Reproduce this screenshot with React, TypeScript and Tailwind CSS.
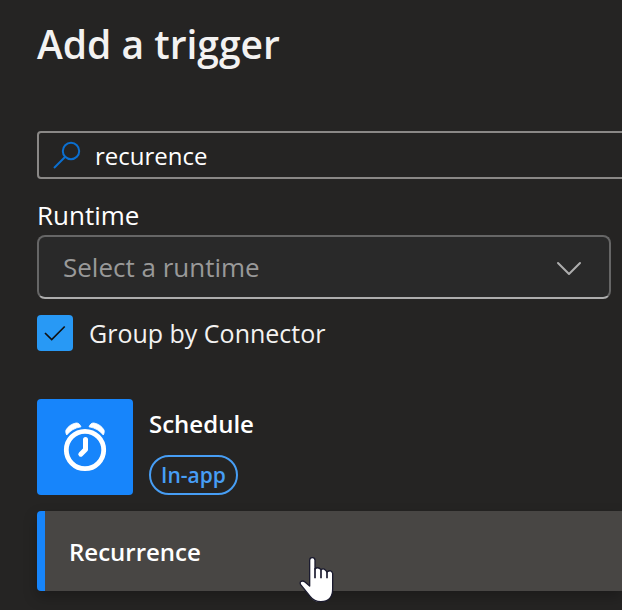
export default function App() {
  return (
    <main className="relative min-h-screen overflow-hidden bg-[#252423] pt-[18px] pl-[37px] font-['Open_Sans','Noto_Sans',sans-serif] text-white">
      <h1 className="text-[39px] leading-[52px] font-semibold text-[#f3f2f1]">Add a trigger</h1>

      <div className="mt-[61px] -mr-1 flex h-12 items-center rounded-[4px] border-2 border-[#8a8886] pl-3">
        <svg className="h-8 w-8 shrink-0" viewBox="0 0 32 32" fill="none" stroke="#0b6fd0" strokeWidth="2" aria-hidden="true">
          <circle cx="20" cy="12" r="8.2" />
          <path d="M14 18 3 29" />
        </svg>
        <input
          aria-label="Search"
          defaultValue="recurence"
          className="ml-3 h-full min-w-0 flex-1 bg-transparent text-[24px] leading-8 text-white outline-none"
        />
      </div>

      <div className="mt-[18px] mr-[11px]">
        <label htmlFor="runtime" className="block pb-0.5 text-[26px] leading-9">Runtime</label>
        <div className="grid items-center">
          <select
            id="runtime"
            className="col-start-1 row-start-1 h-16 w-full appearance-none rounded-[8px] border-2 border-[#666666] border-b-[#adadad] bg-[#292929] pl-6 text-[26px] leading-9 text-[#999999] outline-none"
          >
            <option>Select a runtime</option>
          </select>
          <svg className="pointer-events-none col-start-1 row-start-1 mr-7 h-7 w-7 justify-self-end" viewBox="0 0 28 28" fill="none" stroke="#adadad" strokeWidth="2" strokeLinecap="round" strokeLinejoin="round" aria-hidden="true">
            <path d="M3 10 14 21 25 10" />
          </svg>
        </div>
      </div>

      <label className="mt-4 flex items-center gap-4 text-[25px] leading-9 text-[#f3f2f1]">
        <span className="grid h-9 w-9 place-items-center">
          <input type="checkbox" defaultChecked className="col-start-1 row-start-1 h-9 w-9 appearance-none rounded-[4px] bg-[#2899f5]" />
          <svg className="pointer-events-none col-start-1 row-start-1 h-9 w-9" viewBox="0 0 36 36" fill="none" stroke="#111111" strokeWidth="1.7" aria-hidden="true">
            <path d="M8 18 14.7 24.5 27.7 11.5" />
          </svg>
        </span>
        Group by Connector
      </label>

      <section className="mt-12 flex gap-4">
        <svg className="h-24 w-24 rounded-[4px] bg-[#1785fb]" viewBox="0 0 96 96" fill="none" stroke="white" aria-hidden="true">
          <circle cx="48" cy="51" r="18.7" strokeWidth="4.8" />
          <path d="M48.5 40.5V50.5L43.8 55.2" strokeWidth="5" strokeLinecap="round" strokeLinejoin="round" />
          <path d="M29.7 36C28.7 34 28.5 32.5 29 31 31 27.5 34.5 24.8 39 24 41.5 23.7 43 25.5 44 27.8 38 28.8 33.3 31.5 29.7 36Z" fill="white" strokeWidth="0.8" />
          <path d="M66.3 36C67.3 34 67.5 32.5 67 31 65 27.5 61.5 24.8 57 24 54.5 23.7 53 25.5 52 27.8 58 28.8 62.7 31.5 66.3 36Z" fill="white" strokeWidth="0.8" />
        </svg>
        <div className="flex flex-col items-start justify-between pt-[9px]">
          <h2 className="text-[24px] leading-8 font-semibold">Schedule</h2>
          <span className="flex h-10 items-center rounded-full border-2 border-[#479ef5] px-[10px] pt-0.5 text-[21px] font-semibold text-[#479ef5]">In-app</span>
        </div>
      </section>

      <button className="mt-4 flex h-20 w-full items-center rounded-l-[4px] border-l-8 border-[#1785fb] bg-[#484644] pt-0.5 pl-6 text-[24px] font-semibold shadow-[0_6px_14px_rgba(0,0,0,0.25)]">
        Recurrence
      </button>

      <svg className="pointer-events-none absolute top-[557px] left-[299px] h-[46px] w-9" viewBox="0 0 108 138" aria-hidden="true">
        <path d="M32 87V10A8 8 0 0 1 48 10V36Q57 28 66 38 76 31 84 45 97 36 101 49V96C101 120 88 134 66 134 50 134 42 130 34 119L5 83C-1 73 11 69 18 75Z" fill="white" stroke="#1b1b2f" strokeWidth="4" strokeLinejoin="round" />
        <path d="M48 34V64M66 38V64M84 43V64" stroke="#1b1b2f" strokeWidth="5" />
      </svg>
    </main>
  );
}
